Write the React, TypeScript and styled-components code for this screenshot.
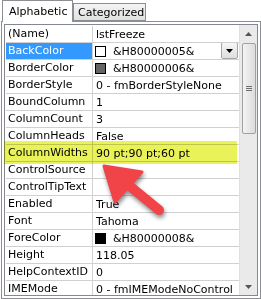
import styled, {createGlobalStyle} from "styled-components";

const GlobalStyle = createGlobalStyle`
  body {
    margin: 0;
    background: #fff;
  }
`;

const Window = styled.div`
  position: relative;
  width: 261px;
  height: 299px;
  overflow: hidden;
  background: #fff;
  font-family: "DejaVu Sans", Tahoma, sans-serif;
  font-size: 11px;
  color: #000;
`;

const TabStrip = styled.div`
  display: flex;
  align-items: flex-end;
  height: 21px;
  padding-left: 2px;
  position: relative;
  z-index: 1;
`;

const Tab = styled.div<{$active?: boolean; $width: number}>`
  box-sizing: border-box;
  width: ${(p) => p.$width}px;
  height: ${(p) => (p.$active ? 22 : 18)}px;
  margin-bottom: ${(p) => (p.$active ? -1 : 0)}px;
  border: 1px solid #8c8e94;
  border-bottom: ${(p) => (p.$active ? "none" : "1px solid #8c8e94")};
  background: ${(p) =>
    p.$active ? "#fff" : "linear-gradient(#f4f4f4, #e1e1e1)"};
  padding: ${(p) => (p.$active ? "4px 0 0 6px" : "2px 0 0 4px")};
  white-space: nowrap;
  overflow: hidden;
`;

const Panel = styled.div`
  box-sizing: border-box;
  margin-left: 1px;
  width: 260px;
  height: 278px;
  border: 1px solid #8c8e94;
  padding: 2px;
`;

const Grid = styled.div`
  box-sizing: border-box;
  height: 100%;
  border: 1px solid #828790;
  padding: 1px 0 0 1px;
  display: flex;
  overflow: hidden;
`;

const Rows = styled.div`
  flex: 1;
  overflow: hidden;
`;

const Row = styled.div`
  box-sizing: border-box;
  display: grid;
  grid-template-columns: 87px 1fr;
  height: 17px;
  border-bottom: 1px solid #d0d0d0;
`;

const NameCell = styled.div<{$selected?: boolean}>`
  box-sizing: border-box;
  border-right: 1px solid #d0d0d0;
  padding-left: 2px;
  line-height: 16px;
  white-space: nowrap;
  overflow: hidden;
  background: ${(p) => (p.$selected ? "#3399ff" : "transparent")};
  color: ${(p) => (p.$selected ? "#fff" : "#000")};
`;

const ValueCell = styled.div`
  display: flex;
  align-items: center;
  padding-left: 2px;
  white-space: nowrap;
  overflow: hidden;
`;

const Swatch = styled.span<{$color: string}>`
  box-sizing: border-box;
  width: 11px;
  height: 11px;
  margin-right: 6px;
  border: 1px solid #000;
  background: ${(p) => p.$color};
  flex: none;
`;

const ValueText = styled.span`
  padding-left: 1px;
`;

const DropButton = styled.span`
  box-sizing: border-box;
  margin-left: auto;
  margin-right: 1px;
  margin-top: -1px;
  width: 17px;
  height: 17px;
  flex: none;
  display: flex;
  align-items: center;
  justify-content: center;
  border: 1px solid #a7a7a7;
  border-radius: 2px;
  background: linear-gradient(#f6f6f6, #dedede);
`;

const ScrollBar = styled.div`
  box-sizing: border-box;
  width: 18px;
  margin-top: -1px;
  background: #eaeaea;
  border-left: 1px solid #e0e0e0;
  display: flex;
  flex-direction: column;
  align-items: center;
`;

const ScrollArrow = styled.div`
  height: 17px;
  width: 100%;
  display: flex;
  align-items: center;
  justify-content: center;
  flex: none;
`;

const Thumb = styled.div`
  box-sizing: border-box;
  width: 14px;
  height: 91px;
  margin-top: 1px;
  border: 1px solid #a0a0a0;
  border-radius: 2px;
  background: linear-gradient(90deg, #f3f3f3, #dcdcdc);
  display: flex;
  align-items: center;
  justify-content: center;
`;

const Grip = styled.div`
  width: 6px;
  height: 5px;
  background: repeating-linear-gradient(
    #6d6d6d 0 1px,
    transparent 1px 2px
  );
`;

const Track = styled.div`
  flex: 1;
`;

const Highlight = styled.div`
  position: absolute;
  left: 4px;
  top: 141px;
  width: 233px;
  height: 23px;
  background: #eaf25a;
  mix-blend-mode: multiply;
  pointer-events: none;
`;

const Arrow = styled.svg`
  position: absolute;
  left: 0;
  top: 0;
  pointer-events: none;
  filter: drop-shadow(1px 3px 2px rgba(0, 0, 0, 0.45));
`;

type Prop = {
  name: string;
  value: string;
  swatch?: string;
  selected?: boolean;
  dropdown?: boolean;
};

const props: Prop[] = [
  {name: "(Name)", value: "lstFreeze"},
  {name: "BackColor", value: "&H80000005&", swatch: "#fff", selected: true, dropdown: true},
  {name: "BorderColor", value: "&H80000006&", swatch: "#646464"},
  {name: "BorderStyle", value: "0 - fmBorderStyleNone"},
  {name: "BoundColumn", value: "1"},
  {name: "ColumnCount", value: "3"},
  {name: "ColumnHeads", value: "False"},
  {name: "ColumnWidths", value: "90 pt;90 pt;60 pt"},
  {name: "ControlSource", value: ""},
  {name: "ControlTipText", value: ""},
  {name: "Enabled", value: "True"},
  {name: "Font", value: "Tahoma"},
  {name: "ForeColor", value: "&H80000008&", swatch: "#000"},
  {name: "Height", value: "118.05"},
  {name: "HelpContextID", value: "0"},
  {name: "IMEMode", value: "0 - fmIMEModeNoControl"},
];

export default function App() {
  return (
    <Window>
      <GlobalStyle />
      <TabStrip>
        <Tab $active $width={71}>Alphabetic</Tab>
        <Tab $width={73}>Categorized</Tab>
      </TabStrip>
      <Panel>
        <Grid>
          <Rows>
            {props.map((p) => (
              <Row key={p.name}>
                <NameCell $selected={p.selected}>{p.name}</NameCell>
                <ValueCell>
                  {p.swatch && <Swatch $color={p.swatch} />}
                  <ValueText>{p.value}</ValueText>
                  {p.dropdown && (
                    <DropButton>
                      <svg width="7" height="4" viewBox="0 0 7 4">
                        <path d="M0 0h7L3.5 4z" fill="#000" />
                      </svg>
                    </DropButton>
                  )}
                </ValueCell>
              </Row>
            ))}
          </Rows>
          <ScrollBar>
            <ScrollArrow>
              <svg width="7" height="4" viewBox="0 0 7 4">
                <path d="M3.5 0L7 4H0z" fill="#555" />
              </svg>
            </ScrollArrow>
            <Thumb>
              <Grip />
            </Thumb>
            <Track />
            <ScrollArrow>
              <svg width="7" height="4" viewBox="0 0 7 4">
                <path d="M0 0h7L3.5 4z" fill="#555" />
              </svg>
            </ScrollArrow>
          </ScrollBar>
        </Grid>
      </Panel>
      <Highlight />
      <Arrow width="261" height="299" viewBox="0 0 261 299">
        <line x1="159" y1="210" x2="126" y2="183" stroke="#f04449" strokeWidth="10" strokeLinecap="round" />
        <path d="M104 166L142 172L115 202Z" fill="#f04449" stroke="#f04449" strokeWidth="3" strokeLinejoin="round" />
      </Arrow>
    </Window>
  );
}
